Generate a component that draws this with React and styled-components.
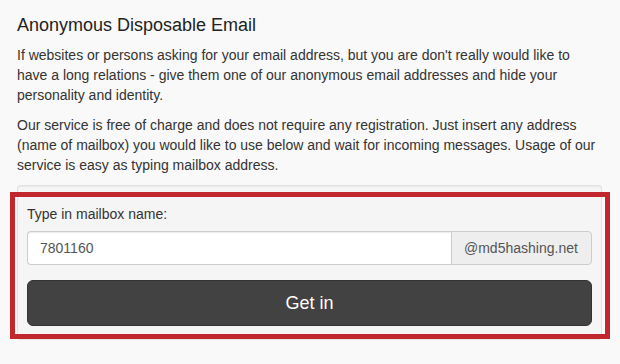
import React from "react"
import styled, { createGlobalStyle } from "styled-components"

const GlobalStyle = createGlobalStyle`
  html, body {
    margin: 0;
    padding: 0;
    background-color: #f9f9f9;
  }
  body {
    font-family: "Liberation Sans", Arial, sans-serif;
    font-size: 14px;
    line-height: 20px;
    color: #333;
  }
  * {
    box-sizing: border-box;
  }
`

const Page = styled.div`
  width: 585px;
  margin-left: 17px;
  padding-top: 15px;
`

const Title = styled.h4`
  margin: 0 0 10px;
  font-size: 18px;
  font-weight: normal;
  line-height: 20px;
  color: #222;
`

const Text = styled.p`
  margin: 0 0 10px;
`

const Well = styled.form`
  position: relative;
  margin-top: 5px;
  padding: 18px 9px 13px;
  background-color: #f5f5f5;
  border: 1px solid #e3e3e3;
  border-radius: 3px;
  box-shadow: inset 0 1px 1px rgba(0, 0, 0, .05);
`

const Highlight = styled.div`
  position: absolute;
  left: -8px;
  top: 6px;
  width: 600px;
  height: 147px;
  border: 5px solid #c3272e;
  pointer-events: none;
`

const FormGroup = styled.div`
  margin-bottom: 15px;
`

const Label = styled.label`
  display: block;
  margin-bottom: 7px;
  color: #333;
`

const InputGroup = styled.div`
  display: flex;
  height: 34px;
`

const Input = styled.input`
  flex: 1;
  min-width: 0;
  height: 34px;
  padding: 6px 12px;
  font-family: inherit;
  font-size: 14px;
  color: #555;
  background-color: #fff;
  border: 1px solid #ccc;
  border-right: none;
  border-radius: 4px 0 0 4px;
  outline: none;
  box-shadow: inset 0 1px 1px rgba(0, 0, 0, .075);
`

const Addon = styled.span`
  display: flex;
  align-items: center;
  width: 141px;
  padding: 0 12px;
  color: #555;
  background-color: #eee;
  border: 1px solid #ccc;
  border-radius: 0 4px 4px 0;
`

const Button = styled.button`
  display: block;
  width: 100%;
  height: 46px;
  padding: 10px 16px;
  font-family: inherit;
  font-size: 18px;
  line-height: 24px;
  color: #fff;
  background-color: #424242;
  border: 1px solid #333;
  border-radius: 6px;
  cursor: pointer;
`

export default function App() {
  return (
    <>
      <GlobalStyle />
      <Page>
        <Title>Anonymous Disposable Email</Title>
        <Text>
          If websites or persons asking for your email address, but you are don't really would like to
          have a long relations - give them one of our anonymous email addresses and hide your
          personality and identity.
        </Text>
        <Text>
          Our service is free of charge and does not require any registration. Just insert any address
          (name of mailbox) you would like to use below and wait for incoming messages. Usage of our
          service is easy as typing mailbox address.
        </Text>
        <Well onSubmit={e => e.preventDefault()}>
          <FormGroup>
            <Label>Type in mailbox name:</Label>
            <InputGroup>
              <Input defaultValue="7801160" />
              <Addon>@md5hashing.net</Addon>
            </InputGroup>
          </FormGroup>
          <Button type="submit">Get in</Button>
          <Highlight />
        </Well>
      </Page>
    </>
  )
}
